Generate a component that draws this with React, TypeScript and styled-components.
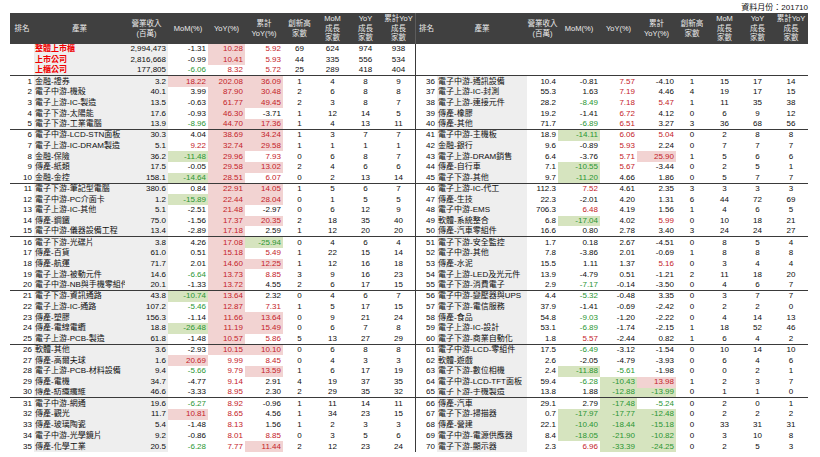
import React from 'react';
import styled, { createGlobalStyle, css } from 'styled-components';

const LEFT_COLS = [24, 91, 43, 40, 37, 38, 33, 33, 33, 33];
const RIGHT_COLS = [21, 90, 31, 42, 37, 39, 32, 33, 33, 34];

const HEADS = [
  '排名',
  '產業',
  '營業收入\n(百萬)',
  'MoM(%)',
  'YoY(%)',
  '累計\nYoY(%)',
  '創新高\n家數',
  'MoM\n成長\n家數',
  'YoY\n成長\n家數',
  '累計YoY\n成長\n家數',
];

const SUMMARY = [
  '整體上市櫃|2,994,473|-1.31|10.28|5.92|69|624|974|938',
  '上市公司|2,816,668|-0.99|10.41|5.93|44|335|556|534',
  '上櫃公司|177,805|-6.06|8.32|5.72|25|289|418|404',
];

const LEFT_ROWS = [
  '1|金融-證券|3.2|18.22|202.08|36.09|1|4|8|9',
  '2|電子中游-機殼|40.1|3.99|87.90|30.48|2|6|8|8',
  '3|電子上游-IC-製造|13.5|-0.63|61.77|49.45|2|3|8|7',
  '4|電子下游-太陽能|17.6|-0.93|46.30|-3.71|1|12|14|5',
  '5|電子下游-工業電腦|13.9|-8.96|44.70|17.36|1|4|13|11',
  '6|電子中游-LCD-STN面板|30.3|4.04|38.69|34.24|1|3|7|7',
  '7|電子上游-IC-DRAM製造|5.1|9.22|32.74|29.58|1|1|1|1',
  '8|金融-保險|36.2|-11.48|29.96|7.93|0|6|8|7',
  '9|傳產-紙類|17.5|-0.05|29.58|13.02|2|4|6|6',
  '10|金融-金控|158.1|-14.64|28.51|6.07|0|2|13|14',
  '11|電子下游-筆記型電腦|380.6|0.84|22.91|14.05|1|5|6|7',
  '12|電子中游-PC介面卡|1.2|-15.89|22.44|28.04|0|1|5|5',
  '13|電子上游-IC-其他|5.1|-2.51|21.48|-2.97|0|6|12|9',
  '14|傳產-鋼鐵|75.0|-1.56|17.37|20.35|2|18|35|40',
  '15|電子中游-儀器設備工程|13.4|-2.89|17.18|2.59|1|12|20|20',
  '16|電子下游-光碟片|3.8|4.26|17.08|-25.94|0|4|6|4',
  '17|傳產-百貨|61.0|0.51|15.18|5.49|1|22|15|14',
  '18|傳產-航運|71.7|2.01|14.60|12.25|1|12|16|18',
  '19|電子上游-被動元件|14.6|-6.64|13.73|8.85|3|9|16|23',
  '20|電子中游-NB與手機零組件|20.1|-1.33|13.72|4.55|2|6|17|15',
  '21|電子下游-資訊通路|43.8|-10.74|13.64|2.32|0|4|6|7',
  '22|電子上游-IC-通路|107.2|-5.46|12.87|7.31|1|5|17|15',
  '23|傳產-塑膠|156.3|-1.14|11.66|13.64|0|9|21|24',
  '24|傳產-電線電纜|18.8|-26.48|11.19|15.49|0|6|7|8',
  '25|電子上游-PCB-製造|61.8|-1.48|10.57|5.86|5|13|27|29',
  '26|軟體-其他|3.6|-2.93|10.15|10.10|0|6|8|8',
  '27|傳產-高爾夫球|1.6|20.69|9.99|8.45|0|4|3|3',
  '28|電子上游-PCB-材料設備|9.4|-5.66|9.79|13.59|1|6|17|19',
  '29|傳產-電機|34.7|-4.77|9.14|2.91|4|19|37|35',
  '30|傳產-紡織纖維|46.6|-3.33|8.95|2.30|2|29|35|32',
  '31|電子中游-網通|19.6|-6.27|8.92|-0.96|1|11|14|11',
  '32|傳產-觀光|11.7|10.81|8.65|4.56|1|34|23|15',
  '33|傳產-玻璃陶瓷|5.4|-1.48|8.13|1.56|1|2|3|3',
  '34|電子中游-光學鏡片|9.2|-0.86|8.01|8.85|0|3|5|6',
  '35|傳產-化學工業|20.5|-6.28|7.77|11.44|2|12|23|24',
];

const RIGHT_ROWS = [
  '36|電子中游-通訊設備|10.4|-0.81|7.57|-4.10|1|15|17|14',
  '37|電子上游-IC-封測|55.3|1.63|7.19|4.46|4|19|17|15',
  '38|電子上游-連接元件|28.2|-8.49|7.18|5.47|1|11|35|38',
  '39|傳產-橡膠|19.2|-1.41|6.72|4.12|0|6|9|12',
  '40|傳產-其他|71.7|-6.89|6.51|3.27|3|36|68|56',
  '41|電子中游-主機板|18.9|-14.11|6.06|5.04|0|2|8|8',
  '42|金融-銀行|9.6|-0.89|5.93|2.24|0|7|7|7',
  '43|電子上游-DRAM銷售|6.4|-3.76|5.71|25.90|1|5|6|6',
  '44|傳產-自行車|7.1|-10.55|5.67|-3.44|0|2|5|1',
  '45|電子下游-其他|9.7|-11.20|4.66|1.86|0|5|7|7',
  '46|電子上游-IC-代工|112.3|7.52|4.61|2.35|3|3|3|3',
  '47|傳產-生技|22.3|-2.01|4.20|1.31|6|44|72|69',
  '48|電子中游-EMS|706.3|6.48|4.19|1.56|1|4|6|5',
  '49|軟體-系統整合|6.8|-17.04|4.02|5.99|0|10|18|21',
  '50|傳產-汽車零組件|16.6|0.80|2.78|3.40|3|24|24|27',
  '51|電子下游-安全監控|1.7|0.18|2.67|-4.51|0|8|5|4',
  '52|電子中游-其他|7.8|-3.86|2.01|-0.69|1|8|8|8',
  '53|傳產-水泥|15.5|1.11|1.37|5.16|0|3|4|4',
  '54|電子上游-LED及光元件|13.9|-4.79|0.51|-1.21|2|11|18|20',
  '55|電子下游-消費電子|2.9|-7.17|-0.14|-3.50|0|4|6|7',
  '56|電子中游-變壓器與UPS|4.4|-5.32|-0.48|3.35|0|3|7|7',
  '57|電子下游-電信服務|37.9|-1.41|-0.69|-2.42|0|2|2|0',
  '58|傳產-食品|54.8|-9.03|-1.20|-2.22|0|4|14|13',
  '59|電子上游-IC-設計|53.1|-6.89|-1.74|-2.15|1|18|52|46',
  '60|電子下游-商業自動化|1.8|5.57|-2.44|0.82|1|6|4|2',
  '61|電子中游-LCD-零組件|17.5|-6.49|-3.12|-1.54|0|10|14|10',
  '62|軟體-遊戲|2.6|-2.05|-4.79|-3.93|0|6|4|6',
  '63|電子下游-數位相機|2.4|-11.88|-5.61|-1.98|0|0|2|1',
  '64|電子中游-LCD-TFT面板|59.4|-6.28|-10.43|13.98|1|2|3|7',
  '65|電子下游-手機製造|13.8|1.88|-12.88|-13.99|0|1|1|0',
  '66|傳產-汽車|29.1|2.79|-17.48|-5.24|0|2|0|1',
  '67|電子下游-掃描器|0.7|-17.97|-17.77|-12.48|0|2|2|2',
  '68|傳產-營建|22.1|-10.40|-18.44|-15.18|0|33|31|31',
  '69|電子中游-電源供應器|8.4|-18.05|-21.90|-10.82|0|3|10|8',
  '70|電子下游-顯示器|2.3|6.96|-33.39|-24.25|0|2|5|3',
];

type Tone = 'red' | 'green' | 'plain';
type Fill = 'pink' | 'mint' | 'none';

const toneOf = (v: number): Tone => (v > 5 ? 'red' : v < -5 ? 'green' : 'plain');
const fillOf = (v: number): Fill => (v > 10 ? 'pink' : v < -10 ? 'mint' : 'none');

const TONE = { red: '#c42229', green: '#2a9632', plain: '#0d0d0d' };
const FILL = { pink: '#f2d3d2', mint: '#d6e4bf', none: 'transparent' };

const GlobalStyle = createGlobalStyle`
  html, body {
    margin: 0;
    padding: 0;
    background: #ffffff;
  }
  body {
    font-family: "Liberation Sans", "Noto Sans CJK TC", sans-serif;
    color: #0d0d0d;
  }
`;

const Page = styled.div`
  width: 820px;
  height: 457px;
  overflow: hidden;
  box-sizing: border-box;
  padding: 2px 0 0 10px;
`;

const Sheet = styled.div`
  width: 798px;
`;

const Caption = styled.div`
  height: 11px;
  font-size: 8px;
  line-height: 11px;
  text-align: right;
  color: #111;
`;

const HeaderBar = styled.div`
  display: flex;
  height: 31px;
  background: #404040;
  color: #ececec;
`;

const HeadGrid = styled.div<{ $cols: number[]; $split?: boolean }>`
  display: grid;
  grid-template-columns: ${(p) => p.$cols.map((c) => `${c}px`).join(' ')};
  ${(p) =>
    p.$split &&
    css`
      border-left: 1px solid #5c5c5c;
    `}
`;

const HeadCell = styled.div`
  display: flex;
  align-items: center;
  justify-content: center;
  text-align: center;
  white-space: pre-line;
  font-size: 7.5px;
  line-height: 9.5px;
`;

const Body = styled.div`
  display: flex;
`;

const Half = styled.div<{ $split?: boolean }>`
  display: flex;
  flex-direction: column;
  ${(p) =>
    p.$split &&
    css`
      border-left: 1px solid #3a3a3a;
    `}
`;

const Line = styled.div<{ $cols: number[]; $sep?: boolean }>`
  display: grid;
  grid-template-columns: ${(p) => p.$cols.map((c) => `${c}px`).join(' ')};
  height: 10.74px;
  box-sizing: border-box;
  font-size: 8px;
  line-height: 10px;
  ${(p) =>
    p.$sep &&
    css`
      border-bottom: 1px solid #3a3a3a;
    `}
`;

const Cell = styled.div`
  display: flex;
  align-items: center;
  overflow: hidden;
  white-space: nowrap;
`;

const RankCell = styled(Cell)`
  justify-content: flex-end;
  padding-right: 2px;
`;

const NameCell = styled(Cell)<{ $headline?: boolean; $shade?: boolean }>`
  padding-left: 1px;
  background: ${(p) => (p.$shade ? '#eeeeee' : 'transparent')};
  ${(p) =>
    p.$headline &&
    css`
      color: #f00000;
      font-weight: bold;
    `}
`;

const RevCell = styled(Cell)<{ $shade?: boolean }>`
  justify-content: flex-end;
  padding-right: 2px;
  background: ${(p) => (p.$shade ? '#eeeeee' : 'transparent')};
`;

const PctCell = styled(Cell)<{ $tone: Tone; $fill: Fill }>`
  justify-content: flex-end;
  padding-right: 2px;
  color: ${(p) => TONE[p.$tone]};
  background: ${(p) => FILL[p.$fill]};
`;

const CountCell = styled(Cell)`
  justify-content: center;
`;

const Pct: React.FC<{ value: string }> = ({ value }) => {
  const v = parseFloat(value);
  return (
    <PctCell $tone={toneOf(v)} $fill={fillOf(v)}>
      {value}
    </PctCell>
  );
};

const Head: React.FC<{ cols: number[]; split?: boolean }> = ({ cols, split }) => (
  <HeadGrid $cols={cols} $split={split}>
    {HEADS.map((h) => (
      <HeadCell key={h}>{h}</HeadCell>
    ))}
  </HeadGrid>
);

const DataLine: React.FC<{ raw: string; index: number; cols: number[]; shadeRev: boolean }> = ({
  raw,
  index,
  cols,
  shadeRev,
}) => {
  const [rank, name, rev, mom, yoy, cum, hi, momN, yoyN, cumN] = raw.split('|');
  const sep = (index + 1) % 5 === 0 && index < 34;
  return (
    <Line $cols={cols} $sep={sep}>
      <RankCell>{rank}</RankCell>
      <NameCell $shade>{name}</NameCell>
      <RevCell $shade={shadeRev}>{rev}</RevCell>
      <Pct value={mom} />
      <Pct value={yoy} />
      <Pct value={cum} />
      <CountCell>{hi}</CountCell>
      <CountCell>{momN}</CountCell>
      <CountCell>{yoyN}</CountCell>
      <CountCell>{cumN}</CountCell>
    </Line>
  );
};

const SummaryLine: React.FC<{ raw: string; last: boolean }> = ({ raw, last }) => {
  const [name, rev, mom, yoy, cum, hi, momN, yoyN, cumN] = raw.split('|');
  return (
    <Line $cols={LEFT_COLS} $sep={last}>
      <RankCell />
      <NameCell $shade $headline>
        {name}
      </NameCell>
      <RevCell $shade>{rev}</RevCell>
      <Pct value={mom} />
      <Pct value={yoy} />
      <Pct value={cum} />
      <CountCell>{hi}</CountCell>
      <CountCell>{momN}</CountCell>
      <CountCell>{yoyN}</CountCell>
      <CountCell>{cumN}</CountCell>
    </Line>
  );
};

export default function App() {
  return (
    <>
      <GlobalStyle />
      <Page>
        <Sheet>
          <Caption>資料月份：201710</Caption>
          <HeaderBar>
            <Head cols={LEFT_COLS} />
            <Head cols={RIGHT_COLS} split />
          </HeaderBar>
          <Body>
            <Half>
              {SUMMARY.map((s, i) => (
                <SummaryLine key={s} raw={s} last={i === SUMMARY.length - 1} />
              ))}
              {LEFT_ROWS.map((r, i) => (
                <DataLine key={r} raw={r} index={i} cols={LEFT_COLS} shadeRev />
              ))}
            </Half>
            <Half $split>
              {SUMMARY.map((s, i) => (
                <Line key={s} $cols={RIGHT_COLS} $sep={i === SUMMARY.length - 1} />
              ))}
              {RIGHT_ROWS.map((r, i) => (
                <DataLine key={r} raw={r} index={i} cols={RIGHT_COLS} shadeRev={false} />
              ))}
            </Half>
          </Body>
        </Sheet>
      </Page>
    </>
  );
}
